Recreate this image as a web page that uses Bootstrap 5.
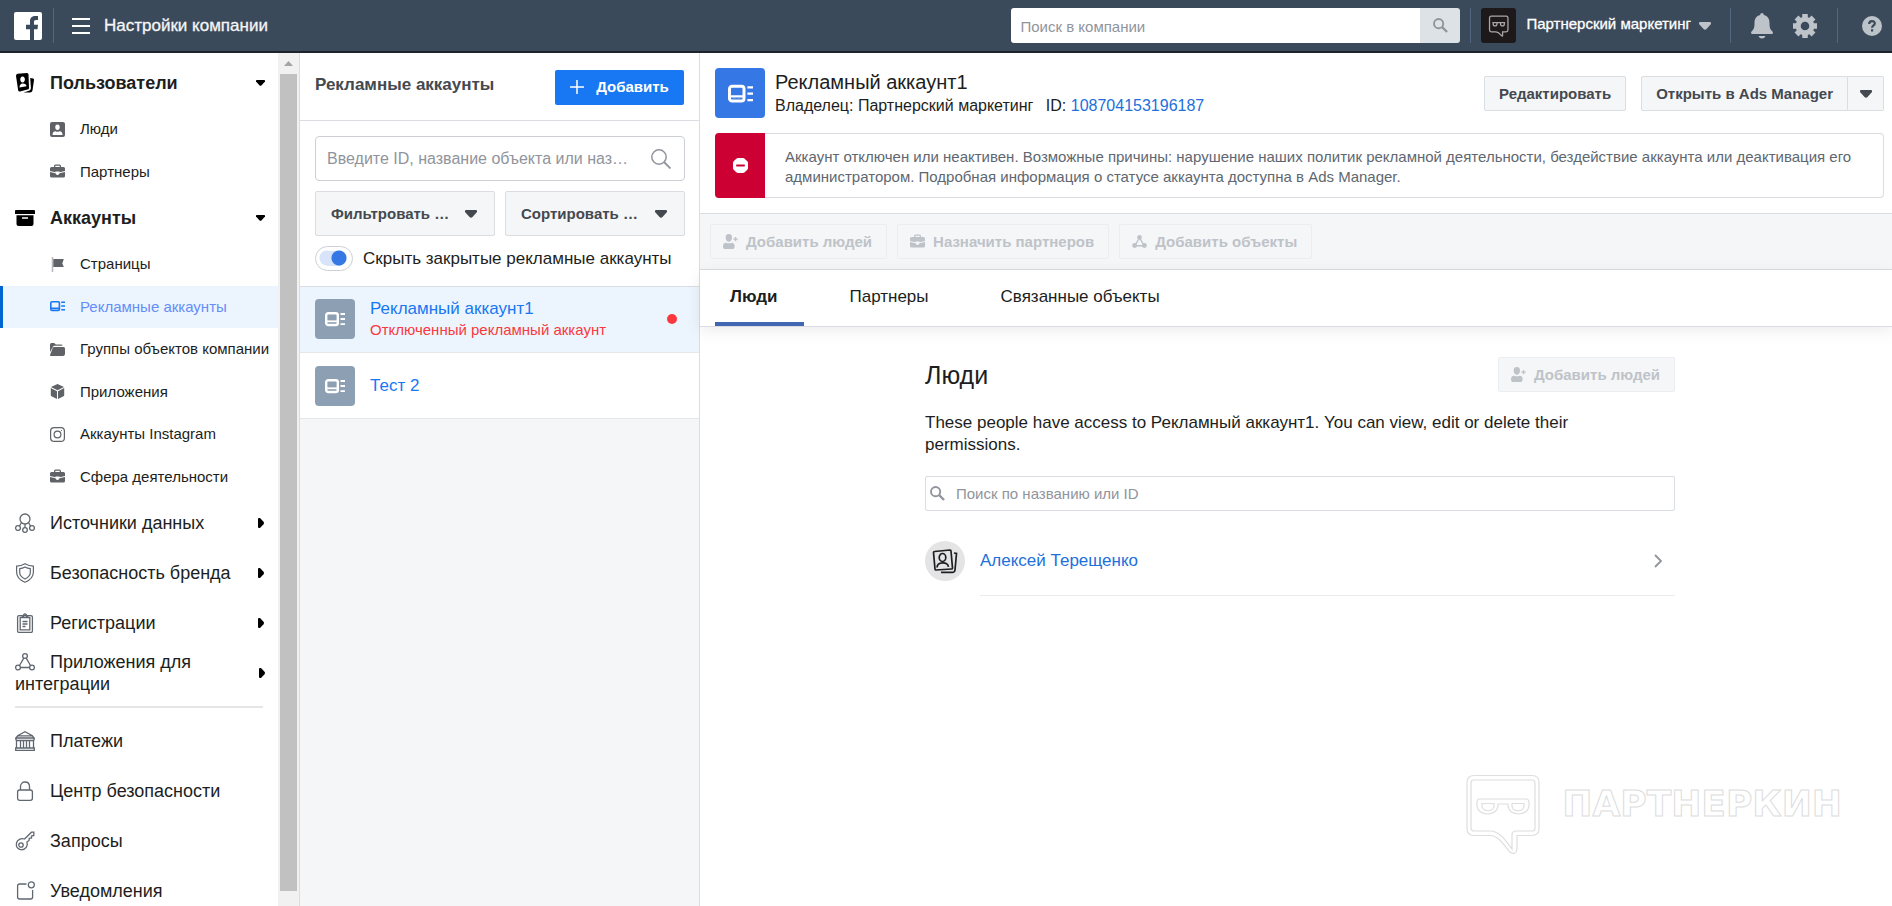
<!DOCTYPE html>
<html lang="ru">
<head>
<meta charset="utf-8">
<meta name="viewport" content="width=device-width, initial-scale=1">
<title>Настройки компании</title>
<link href="https://cdn.jsdelivr.net/npm/bootstrap@5.3.0/dist/css/bootstrap.min.css" rel="stylesheet">
<style>
  :root { --line:#dadde1; --link:#216fdb; --blue:#1877f2; --grey:#f5f6f7; --ink:#1c1e21; --sel:#ecf5fd; }
  body { font-family:"Liberation Sans",Arial,sans-serif; font-size:17px; line-height:22px; color:var(--ink); }
  a { text-decoration:none; color:inherit; }
  svg { display:block; flex:none; }
  button { font-family:inherit; }
  .i15 { width:15px; height:15px; } .i20 { width:20px; height:20px; } .i24 { width:24px; height:24px; }
  .caret { width:12px; height:8px; }

  .topbar { height:53px; background:#3b4a5b; border-bottom:2px solid #1d222c; padding:8px 10px 8px 14px; }
  .vline { width:1px; height:35px; background:#526680; }
  .top-logo { margin-right:11px; }
  .top-menu { margin-left:18px; }
  .top-title { margin-left:14px; color:#f5f6f7; -webkit-text-stroke:.3px #f5f6f7; }
  .top-search { width:449px; height:35px; margin-right:10px; }
  .top-search .form-control { border:0; border-radius:3px 0 0 3px; font-size:15px; line-height:22px; padding:2px 9px 0; color:var(--ink); }
  .top-search .btn { width:40px; background:#dde2e6; border:0; border-radius:0 3px 3px 0; color:#90949c; padding:0; }
  ::placeholder { color:#90949c !important; opacity:1; }
  .avatar { width:35px; height:35px; background:#1d191b; border-radius:3px; color:#aaa6a8; margin-left:10px; }
  .top-name { font-size:15px; line-height:30px; color:#fff; -webkit-text-stroke:.3px #fff; margin-left:10px; }
  .top-icons, .top-caret { color:#bec3c9; }
  .top-icons { gap:20px; padding-left:19px; }
  .bare { background:none; border:0; padding:0; color:inherit; }

  .sidebar { width:278px; padding-top:5px; font-size:18px; }
  .side-head { height:50px; padding:0 13px 0 15px; }
  .side-head .i20 { margin-right:15px; color:#606770; }
  .side-open { font-weight:700; }
  .side-open .i20 { color:#000; }
  .arrow-r { width:6px; height:10px; margin-right:1px; color:#000; }
  .arrow-d { width:9px; height:6px; color:#000; }
  .side-sub li { height:43px; }
  .side-sub li:nth-child(even) { height:42px; }
  .side-sub a { height:100%; padding:0 0 1px 50px; font-size:15px; white-space:nowrap; }
  .side-sub svg { margin-right:15px; color:#5f6266; }
  .side-sub a.current { background:var(--sel); box-shadow:inset 3px 0 0 #0064d1; color:#648df7; }
  .side-sub a.current svg { color:var(--blue); }
  .side-rule { height:2px; margin:8px 15px; background:#e5e6e8; }
  .side-inline { display:inline-block; margin-bottom:-3px; vertical-align:-1px; }
  .scroller { width:21px; background:#f1f1f1; padding:0 2px 15px; }
  .scroller .up { height:21px; color:#a3a3a3; }
  .scroller .thumb { background:#c1c1c1; }

  .accounts { width:401px; background:#f5f6f8; border:solid var(--line); border-width:0 1px; }
  .acc-head { height:68px; padding:1px 15px 0; border-bottom:1px solid var(--line); }
  .acc-head h1 { font-size:17px; font-weight:700; color:#444950; line-height:22px; margin:0 0 4px; }
  .btn-add { width:129px; height:35px; background:var(--blue); color:#fff; border:0; border-radius:2px; font-size:15px; font-weight:700; padding:0; }
  .acc-tools { padding:15px 14px 15px 15px; border-bottom:1px solid var(--line); }
  .acc-search { height:45px; border:1px solid #ccd0d5; border-radius:4px; padding:0 13px 0 11px; color:#90949c; }
  .acc-search input { border:0; outline:0; background:none; font-size:16px; padding:0; min-width:0; }
  .acc-filters { gap:10px; margin:10px 0; }
  .btn-plain { height:35px; background:var(--grey); border:1px solid var(--line); border-radius:2px; color:#444950; font-size:15px; font-weight:700; padding:0 14px; white-space:nowrap; }
  .acc-tools .btn-plain { height:45px; padding:0 17px 0 15px; }
  .btn-plain:disabled { background:var(--grey); color:#bec3c9; border-color:#ebedf0; opacity:1; padding:0 14px 0 12px; }
  .btn-more { width:36px; }
  .toggle { flex:none; appearance:none; width:38px; height:25px; margin:0; border:1px solid #ccd0d5; border-radius:13px; background:
    radial-gradient(circle at 23px 11px,#3578e5 7px,transparent 8px),
    linear-gradient(#d7e4fa,#d7e4fa) 11px 4px / 14px 15px no-repeat,
    radial-gradient(circle at 11px 11px,#d7e4fa 7px,transparent 8px) #fff; }
  .toggle-text { margin-left:10px; }
  .acc-item { height:66px; padding:0 22px 0 15px; border-bottom:1px solid #e5e7ea; background:#fff; color:var(--blue); }
  .acc-item.current { background:var(--sel); padding-bottom:1px; }
  .tile { width:40px; height:40px; background:#8d9fb2; border-radius:4px; color:#fff; }
  .acc-item .tile { margin-right:15px; }
  .acc-err { font-size:15px; line-height:20px; color:#fa383e; }
  .dot { width:10px; height:10px; border-radius:50%; background:#fa383e; }

  .details { padding:15px 8px 15px 15px; }
  .details .tile { width:50px; height:50px; background:#3578e5; }
  .names { margin-left:10px; }
  .details h2 { font-size:20px; line-height:24px; margin:2px 0 0; }
  .owner { font-size:16px; line-height:23px; }
  .head-buttons { gap:15px; }
  .link-fb { color:var(--link); }
  .notice { margin-top:15px; border:1px solid var(--line); border-left:0; border-radius:4px; min-height:65px; font-size:15px; line-height:20px; color:#606770; }
  .notice-mark { width:50px; margin:-1px 0; background:#cc0033; color:#fff; border-radius:4px 0 0 4px; }
  .notice p { margin:0; padding:10px 20px 8px; }
  .actions { background:#f5f6f8; border:solid var(--line); border-width:1px 0; padding:10px; gap:10px; }
  .tabs { height:57px; border-bottom:1px solid var(--line); padding-left:15px; gap:30px; box-shadow:0 4px 15px rgba(0,0,0,.08); }
  .tabs a { padding:6px 27px 0 15px; border-bottom:4px solid transparent; line-height:42px; }
  .tabs a.current { font-weight:700; border-color:#4267b2; }
  .people { max-width:750px; padding-top:30px; }
  .people h3 { font-size:25px; line-height:30px; margin:0; }
  .people p { margin:20px 0; }
  .find { height:35px; border:1px solid var(--line); border-radius:2px; padding:0 4px; color:#90949c; }
  .find input { border:0; outline:0; background:none; font-size:15px; padding:0; margin-left:11px; }
  .person-pic { width:40px; height:40px; border-radius:50%; background:#e4e4e4; color:#1c1e21; }
  .person { margin-top:15px; }
  .person-row { height:70px; border-bottom:1px solid #e9ebee; margin-left:15px; padding-right:10px; }
  .watermark { right:50px; bottom:50px; pointer-events:none; gap:19px; }
  .watermark span { font-family:"DejaVu Sans",sans-serif; font-weight:700; font-size:36px; line-height:40px; color:#fff; -webkit-text-stroke:1px #dcdcdc; margin-top:10px; }
</style>
</head>
<body class="d-flex flex-column vh-100 overflow-hidden">

<svg class="d-none" aria-hidden="true">
  <symbol id="ads" viewBox="0 0 20 20"><rect x="1.200" y="4.200" width="11.600" height="11.800" rx="2" fill="none" stroke="currentColor" stroke-width="2.400"/><path d="M2 12.300h10" stroke="currentColor" stroke-width="1.800"/><path d="M4 14.500h2.500M8 14.500h2" stroke="#9fb3cc" stroke-width=".8"/><path d="M15.500 5h4.500M15.500 10h4.500M15.500 15.200h4.500" stroke="currentColor" stroke-width="1.800"/></symbol>
  <symbol id="ads-sm" viewBox="0 0 15 15"><rect x=".8" y="2.800" width="8.600" height="8.600" rx="1.200" fill="none" stroke="currentColor" stroke-width="1.600"/><path d="M1 9.300h8.500M11.200 3.300H15M11.200 7H15M11.200 10.800H15" stroke="currentColor" stroke-width="1.500"/></symbol>
  <symbol id="case" viewBox="0 0 15 15"><path fill="currentColor" fill-rule="evenodd" d="M4 3V2q0-1.500 1.500-1.500h4Q11 .5 11 2v1h2.500Q15 3 15 4.500V7L9.500 8.200V7.500h-4v.7L0 7V4.500Q0 3 1.500 3zM5.300 3h4.400V1.800H5.300zM0 8l5.500 1.200q.3 1.800 2 1.800t2-1.800L15 8v4q0 1.500-1.500 1.500h-12Q0 13.500 0 12z"/></symbol>
  <symbol id="find" viewBox="0 0 16 16"><circle cx="6" cy="6" r="4.900" fill="none" stroke="currentColor" stroke-width="2"/><path d="M9.500 9.500l5.500 5.500" stroke="currentColor" stroke-width="2.400"/></symbol>
  <symbol id="down" viewBox="0 0 12 8"><path fill="currentColor" d="M1 0h10q1 0 1 1v1L7.500 7Q6 8.500 4.500 7L0 2V1q0-1 1-1z"/></symbol>
  <symbol id="right" viewBox="0 0 6 10"><path fill="currentColor" d="M0 1q0-1 1-1l1 0 3.500 3.800q1 1.200 0 2.400L2 10H1Q0 10 0 9z"/></symbol>
  <symbol id="adduser" viewBox="0 0 16 16"><path fill="currentColor" d="M6.200 0q3.400 0 3.400 3.700c0 2.600-1.500 4.500-3.400 4.500S2.800 6.300 2.800 3.700Q2.800 0 6.200 0zM3 9.200q3.200 1.300 6.400 0 3 .3 3 3.800Q12.400 16 10.200 16H2.300Q0 16 0 13q0-3.500 3-3.800zM12.600 3.200h1.500v1.500h1.600v1.500h-1.600v1.600h-1.500V6.200H11V4.700h1.600z"/></symbol>
  <symbol id="assets" viewBox="0 0 16 16"><path d="M8 4L3 12.500h10z" fill="none" stroke="currentColor" stroke-width="1.500"/><circle cx="8" cy="3.500" r="2.500" fill="currentColor"/><circle cx="2.800" cy="12.200" r="2.600" fill="currentColor"/><circle cx="13.200" cy="12.200" r="2.600" fill="currentColor"/></symbol>
  <symbol id="mask" viewBox="0 0 80 86"><path d="M10 4h58q7 0 7 7v48q0 7-7 7H54v14q0 6-5 0C42 72 38 66 28 66H10q-7 0-7-7V11q0-7 7-7z" fill="none" stroke="currentColor" stroke-width="5"/><path d="M14 30h50M17 31v4c0 10 15 10 15 0v-4M46 31v4c0 10 15 10 15 0v-4" fill="none" stroke="currentColor" stroke-width="5"/></symbol>
</svg>

<header class="topbar flex-shrink-0 d-flex align-items-center">
  <a href="#" class="top-logo" aria-label="Facebook"><svg width="28" height="28" viewBox="0 0 28 28"><rect width="28" height="28" rx="2" fill="#fff"/><path fill="#3b4a5b" d="M16 28V17.200h-4v-4.400h4V9.500C16 5.700 18.200 4 21.500 4H24v4h-2c-1.600 0-2 .8-2 2v2.800h4l-.5 4.400H20V28z"/></svg></a>
  <span class="vline"></span>
  <button class="bare top-menu" aria-label="Меню"><svg width="18" height="16" viewBox="0 0 18 16"><path d="M0 1h18M0 8h18M0 15h18" stroke="#fff" stroke-width="1.800"/></svg></button>
  <span class="top-title">Настройки компании</span>
  <form class="top-search input-group ms-auto">
    <input class="form-control" type="search" placeholder="Поиск в компании" aria-label="Поиск в компании">
    <button class="btn d-flex align-items-center justify-content-center" type="button" aria-label="Найти"><svg class="i15"><use href="#find"/></svg></button>
  </form>
  <span class="vline"></span>
  <button class="bare d-flex align-items-center">
    <span class="avatar d-flex align-items-center justify-content-center"><svg width="22" height="22"><use href="#mask"/></svg></span>
    <span class="top-name mb-1">Партнерский маркетинг</span>
    <svg class="caret top-caret ms-2"><use href="#down"/></svg>
  </button>
  <div class="top-icons d-flex align-items-center">
    <span class="vline"></span>
    <button class="bare" aria-label="Уведомления"><svg width="22" height="26" viewBox="0 0 22 26"><path fill="currentColor" d="M11 0c1 0 1.800.8 1.800 2C17 3 18.500 6 18.500 10c0 5 .8 6.500 3 8.500.8 1 .4 2.500-1 2.500h-19C.1 21-.3 19.500.5 18.500c2.200-2 3-3.500 3-8.500C3.500 6 5 3 9.200 2 9.200.8 10 0 11 0zM7.500 23h7q-1 2.500-3.500 2.500T7.500 23z"/></svg></button>
    <button class="bare" aria-label="Настройки"><svg class="i24" viewBox="0 0 24 24"><circle cx="12" cy="12" r="6.800" fill="none" stroke="currentColor" stroke-width="5"/><path stroke="currentColor" stroke-width="5.500" d="M12 0v5M12 19v5M0 12h5M19 12h5M3.500 3.500l3.500 3.500M17 17l3.500 3.500M3.500 20.500l3.500-3.500M17 7l3.500-3.500"/></svg></button>
    <span class="vline"></span>
    <button class="bare ms-1" aria-label="Справка"><svg class="i20" viewBox="0 0 20 20"><circle cx="10" cy="10" r="10" fill="currentColor"/><path d="M7.200 8c0-3.800 5.600-3.600 5.600-.5 0 2-2.700 2-2.700 4.300M10.100 13.200v2.200" fill="none" stroke="#3b4a5b" stroke-width="2.200"/></svg></button>
  </div>
</header>

<div class="d-flex flex-grow-1 overflow-hidden">
  <nav class="sidebar flex-shrink-0 overflow-hidden">
    <a href="#" class="side-head side-open d-flex align-items-center"><svg class="i20" viewBox="0 0 20 20"><path fill="currentColor" fill-rule="evenodd" d="M2.500.8L12 0q1.500 0 1.500 1.500L14 15q0 1.500-1.500 1.500L5 18.500q-1.500.3-1.800-1L1 3Q1 1 2.500.8zM7.600 3.500c-3.200 0-3 6 0 6s3.200-6 0-6zM4.500 14.500l7-1.200q-.5-3-3.700-2.800-3.300.3-3.300 4zM15.200 5l3 .6q1 .4.800 1.500l-1.500 10.500q-.5 2-2.500 2l-6.500-.2 5.500-1.600q2-.6 1.900-2.700z"/></svg><span class="flex-grow-1">Пользователи</span><svg class="arrow-d"><use href="#down"/></svg></a>
    <ul class="side-sub list-unstyled m-0">
      <li><a href="#" class="d-flex align-items-center"><svg class="i15" viewBox="0 0 15 15"><path fill="currentColor" fill-rule="evenodd" d="M2 0h11q2 0 2 2v11q0 2-2 2H2q-2 0-2-2V2q0-2 2-2zM7.500 2.500C4.400 2.500 4.600 8 7.500 8s3.100-5.500 0-5.500zM2.500 13h10q0-3.500-3-3.800-2 1-4 0-3 .3-3 3.800z"/></svg>Люди</a></li>
      <li><a href="#" class="d-flex align-items-center"><svg class="i15"><use href="#case"/></svg>Партнеры</a></li>
    </ul>
    <a href="#" class="side-head side-open d-flex align-items-center"><svg class="i20" viewBox="0 0 20 20"><path fill="currentColor" fill-rule="evenodd" d="M1 2h18q1 0 1 1v3H0V3q0-1 1-1zM1.500 7.200h17V16q0 2-2 2h-13q-2 0-2-2zM7 9.200v1.600h6V9.200z"/></svg><span class="flex-grow-1">Аккаунты</span><svg class="arrow-d"><use href="#down"/></svg></a>
    <ul class="side-sub list-unstyled m-0">
      <li><a href="#" class="d-flex align-items-center"><svg class="i15" viewBox="0 0 15 15"><path d="M2.500 0v15" stroke="#b4b6b9" stroke-width="1.500"/><path fill="currentColor" d="M3.300 2h10.500l-1.500 4.500L13.800 10H3.300z"/></svg>Страницы</a></li>
      <li><a href="#" class="current d-flex align-items-center" aria-current="page"><svg class="i15"><use href="#ads-sm"/></svg>Рекламные аккаунты</a></li>
      <li><a href="#" class="d-flex align-items-center"><svg class="i15" viewBox="0 0 15 15"><path fill="currentColor" d="M0 2.500Q0 1 1.500 1h2.700l1.600 1.500H11q1.500 0 1.500 1.200H4.600Q3.500 3.700 3 4.800L0 10zM4 5h9.500Q15 5 15 6.500V12q-.2 2-2 2H1.200Q-.3 14 .2 12.500L2.700 6Q3.100 5 4 5z"/></svg>Группы объектов компании</a></li>
      <li><a href="#" class="d-flex align-items-center"><svg class="i15" viewBox="0 0 15 15"><path fill="currentColor" d="M7.500 0L14 3 7.500 6.300 1 3zM.8 4L7 7.300V15L1.500 12.200Q.8 12 .8 11zM14.200 4L8 7.300V15l5.500-2.800q.7-.2.700-1.200z"/></svg>Приложения</a></li>
      <li><a href="#" class="d-flex align-items-center"><svg class="i15" viewBox="0 0 15 15" fill="none" stroke="currentColor" stroke-width="1.200"><rect x=".6" y=".6" width="13.800" height="13.800" rx="3.500"/><circle cx="7.500" cy="7.500" r="3.400"/><circle cx="11.500" cy="3.500" r=".6" fill="currentColor" stroke="none"/></svg>Аккаунты Instagram</a></li>
      <li><a href="#" class="d-flex align-items-center"><svg class="i15"><use href="#case"/></svg>Сфера деятельности</a></li>
    </ul>
    <a href="#" class="side-head d-flex align-items-center"><svg class="i20" viewBox="0 0 20 20" fill="none" stroke="currentColor" stroke-width="1.300"><circle cx="10" cy="6" r="5"/><circle cx="3" cy="15" r="2.400"/><circle cx="10" cy="17" r="2.300"/><circle cx="17" cy="15" r="2.400"/><path d="M6.500 9.500L4.500 13M10 11v3.700M13.500 9.500l2 3.500"/></svg><span class="flex-grow-1">Источники данных</span><svg class="arrow-r"><use href="#right"/></svg></a>
    <a href="#" class="side-head d-flex align-items-center"><svg class="i20" viewBox="0 0 20 20" fill="none" stroke="currentColor" stroke-width="1.200"><path d="M10 .8Q14 3 18.400 3.200V9c0 5-4 8.500-8.400 10.300C5.600 17.500 1.600 14 1.600 9V3.200Q6 3 10 .8z"/><path d="M10 4Q12.500 5.500 15.300 5.700V9.500c0 3-2.300 5-5.300 6.500-3-1.500-5.300-3.500-5.300-6.500V5.700Q7.500 5.500 10 4z"/></svg><span class="flex-grow-1">Безопасность бренда</span><svg class="arrow-r"><use href="#right"/></svg></a>
    <a href="#" class="side-head d-flex align-items-center"><svg class="i20" viewBox="0 0 20 20" fill="none" stroke="currentColor" stroke-width="1.300"><rect x="2.600" y="2.600" width="14.800" height="16.800" rx="1.500"/><path d="M5.200 4.500h9.600v12.300H5.200zM7 4.500Q7 3 8.500 3q0-2.200 1.500-2.200T11.500 3Q13 3 13 4.500M7.500 8.500h5M7.500 11h5M7.500 13.500h3"/></svg><span class="flex-grow-1">Регистрации</span><svg class="arrow-r"><use href="#right"/></svg></a>
    <a href="#" class="side-head d-flex align-items-center"><span class="flex-grow-1 pe-5"><svg class="i20 side-inline" viewBox="0 0 20 20" fill="none" stroke="currentColor" stroke-width="1.300"><circle cx="10" cy="4" r="2.400"/><circle cx="3" cy="15.500" r="2.400"/><circle cx="17" cy="15.500" r="2.400"/><path d="M8.800 6.200L4.500 13.500M11.200 6.200l4.300 7.300M5.500 15.500h9"/></svg>Приложения для интеграции</span><svg class="arrow-r me-0"><use href="#right"/></svg></a>
    <div class="side-rule"></div>
    <a href="#" class="side-head d-flex align-items-center"><svg class="i20" viewBox="0 0 20 20" fill="none" stroke="currentColor" stroke-width="1.300"><path d="M.8 7L3 4.500 10 .8l7 3.700L19.200 7zM2 4.800h16M1 9.500h18M1 9.500V7M19 9.500V7M1.500 9.500v7.500M5.500 9.500V17M8.500 9.500V17M11.500 9.500V17M14.500 9.500V17M18.500 9.500V17M.7 17h18.600v2.300H.7z"/></svg>Платежи</a>
    <a href="#" class="side-head d-flex align-items-center"><svg class="i20" viewBox="0 0 20 20" fill="none" stroke="currentColor" stroke-width="1.300"><rect x="2.600" y="9" width="14.800" height="10.300" rx="2"/><path d="M5.500 9V5.500c0-6 9-6 9 0V9"/></svg>Центр безопасности</a>
    <a href="#" class="side-head d-flex align-items-center"><svg class="i20" viewBox="0 0 20 20" fill="none" stroke="currentColor" stroke-width="1.300"><path d="M9.500 8L16.500 1.200h2.300V4.500L16.500 5v2l-2.200.3L14 9.500 12 11c1.200 4-1.500 7.800-5.500 7.800S.8 15.500 1.500 12 6 7 9.500 8z"/><circle cx="6" cy="14" r="2.200"/></svg>Запросы</a>
    <a href="#" class="side-head d-flex align-items-center"><svg class="i20" viewBox="0 0 20 20" fill="none" stroke="currentColor" stroke-width="1.300"><path d="M11.500 3H4.600Q2.600 3 2.600 5v11q0 2 2 2h11q2 0 2-2V9"/><circle cx="16.300" cy="3.800" r="3"/></svg>Уведомления</a>
  </nav>
  <div class="scroller flex-shrink-0 d-flex flex-column" aria-hidden="true">
    <div class="up d-flex align-items-center justify-content-center"><svg width="9" height="5" viewBox="0 0 9 5"><path d="M0 5L4.500 0 9 5z" fill="currentColor"/></svg></div>
    <div class="thumb flex-grow-1"></div>
  </div>

  <section class="accounts flex-shrink-0">
    <div class="bg-white">
      <div class="acc-head d-flex align-items-center justify-content-between">
        <h1>Рекламные аккаунты</h1>
        <button class="btn-add d-flex align-items-center justify-content-center gap-2"><svg class="me-1" width="14" height="14" viewBox="0 0 14 14"><path d="M7 0v14M0 7h14" stroke="#fff" stroke-width="1.500"/></svg>Добавить</button>
      </div>
      <div class="acc-tools">
        <div class="acc-search d-flex align-items-center">
          <input class="flex-grow-1" type="search" placeholder="Введите ID, название объекта или наз…" aria-label="Поиск аккаунта">
          <svg class="i20" viewBox="0 0 20 20"><circle cx="8" cy="8" r="7.200" fill="none" stroke="currentColor" stroke-width="1.500"/><path d="M13 13l6.500 6.500" stroke="currentColor" stroke-width="1.800"/></svg>
        </div>
        <div class="acc-filters d-flex">
          <button class="btn-plain w-50 d-flex align-items-center justify-content-between">Фильтровать …<svg class="caret"><use href="#down"/></svg></button>
          <button class="btn-plain w-50 d-flex align-items-center justify-content-between">Сортировать …<svg class="caret"><use href="#down"/></svg></button>
        </div>
        <div class="d-flex align-items-center">
          <input class="toggle" type="checkbox" role="switch" id="hideClosed" checked>
          <label class="toggle-text text-nowrap" for="hideClosed">Скрыть закрытые рекламные аккаунты</label>
        </div>
      </div>
    </div>
    <a href="#" class="acc-item current d-flex align-items-center">
      <span class="tile d-flex align-items-center justify-content-center"><svg class="i20"><use href="#ads"/></svg></span>
      <span class="flex-grow-1"><span class="d-block">Рекламный аккаунт1</span><span class="acc-err d-block">Отключенный рекламный аккаунт</span></span>
      <span class="dot"></span>
    </a>
    <a href="#" class="acc-item d-flex align-items-center">
      <span class="tile d-flex align-items-center justify-content-center"><svg class="i20"><use href="#ads"/></svg></span>
      <span>Тест 2</span>
    </a>
  </section>

  <main class="flex-grow-1 position-relative">
    <div class="details">
      <div class="d-flex align-items-start">
        <span class="tile d-flex align-items-center justify-content-center"><svg width="25" height="25"><use href="#ads"/></svg></span>
        <div class="names flex-grow-1">
          <h2>Рекламный аккаунт1</h2>
          <div class="owner">Владелец: Партнерский маркетинг <span class="ms-2">ID: <a href="#" class="link-fb">108704153196187</a></span></div>
        </div>
        <div class="head-buttons d-flex pt-2">
          <button class="btn-plain">Редактировать</button>
          <div class="btn-group">
            <button class="btn-plain rounded-end-0">Открыть в Ads Manager</button>
            <button class="btn-plain btn-more rounded-start-0 border-start-0 px-0 d-flex align-items-center justify-content-center" aria-label="Ещё"><svg class="caret"><use href="#down"/></svg></button>
          </div>
        </div>
      </div>
      <div class="notice d-flex" role="alert">
        <span class="notice-mark flex-shrink-0 d-flex align-items-center justify-content-center"><svg class="i15" viewBox="0 0 15 15"><path fill="currentColor" fill-rule="evenodd" d="M5 0h5q1 0 1.700.7l2.600 2.600Q15 4 15 5v5q0 1-.7 1.700l-2.600 2.600Q11 15 10 15H5q-1 0-1.700-.7L.7 11.700Q0 11 0 10V5q0-1 .7-1.700L3.300.7Q4 0 5 0zM3.500 6.500q-1 1 0 2h8q1-1 0-2z"/></svg></span>
        <p class="align-self-center">Аккаунт отключен или неактивен. Возможные причины: нарушение наших политик рекламной деятельности, бездействие аккаунта или деактивация его администратором. Подробная информация о статусе аккаунта доступна в Ads Manager.</p>
      </div>
    </div>
    <div class="actions d-flex">
      <button class="btn-plain d-flex align-items-center gap-2" disabled><svg class="i15"><use href="#adduser"/></svg>Добавить людей</button>
      <button class="btn-plain d-flex align-items-center gap-2" disabled><svg class="i15"><use href="#case"/></svg>Назначить партнеров</button>
      <button class="btn-plain d-flex align-items-center gap-2" disabled><svg class="i15"><use href="#assets"/></svg>Добавить объекты</button>
    </div>
    <nav class="tabs d-flex">
      <a href="#" class="current">Люди</a>
      <a href="#">Партнеры</a>
      <a href="#">Связанные объекты</a>
    </nav>
    <div class="ps-2">
      <div class="people mx-auto">
        <div class="d-flex align-items-center justify-content-between">
          <h3>Люди</h3>
          <button class="btn-plain d-flex align-items-center gap-2" disabled><svg class="i15"><use href="#adduser"/></svg>Добавить людей</button>
        </div>
        <p>These people have access to Рекламный аккаунт1. You can view, edit or delete their<br>permissions.</p>
        <div class="find d-flex align-items-center"><svg class="i15"><use href="#find"/></svg><input class="flex-grow-1" type="search" placeholder="Поиск по названию или ID" aria-label="Поиск по названию или ID"></div>
        <a href="#" class="person d-flex align-items-center link-fb">
          <span class="person-pic d-flex align-items-center justify-content-center"><svg width="26" height="26" viewBox="0 0 26 26" fill="none" stroke="currentColor" stroke-width="1.700"><path d="M2.500 3.500l15.500-1.500q1 0 1 1l1.500 17q0 1-1 1L4 22q-1 0-1-1L1.500 4.500q0-1 1-1zM22 5l2.500.5-1.500 16.500q-.3 2.500-2.500 2.300L9 24.300"/><ellipse cx="10.500" cy="9.500" rx="3.300" ry="4"/><path d="M5 19.500q.2-4.500 5.500-4.700t6 4"/></svg></span>
          <span class="person-row flex-grow-1 d-flex align-items-center justify-content-between"><span>Алексей Терещенко</span><svg width="12" height="14" viewBox="0 0 12 14"><path d="M2 1l6 6-6 6" fill="none" stroke="#90949c" stroke-width="1.800"/></svg></span>
        </a>
      </div>
    </div>
    <div class="watermark position-absolute d-flex align-items-start" aria-hidden="true">
      <svg width="78" height="82" viewBox="0 0 78 82" fill="none" stroke="#dedede" stroke-width="1.200"><path d="M9 1.500h58q7 0 7 7v46q0 7-7 7H52V75q-1 7-7 3C38 70 33 61.500 25 61.500H9q-7 0-7-7v-46q0-7 7-7z"/><path d="M9 6h58q3 0 3 3v45q0 3-3 3H51q-4 0-4 4v14C41 67 35 57 25 57H9q-3 0-3-3V9q0-3 3-3z"/><path d="M14 25h47q3 0 3 3v3c0 12-21 12-21 0v-1H33v1c0 12-21 12-21 0v-3q0-3 2-3zM17 29.500h12v2c0 7-12 7-12 0zM47 29.500h12v2c0 7-12 7-12 0z"/></svg>
      <span>ПАРТНЕРКИН</span>
    </div>
  </main>
</div>

<script src="https://cdn.jsdelivr.net/npm/bootstrap@5.3.0/dist/js/bootstrap.bundle.min.js"></script>
</body>
</html>
